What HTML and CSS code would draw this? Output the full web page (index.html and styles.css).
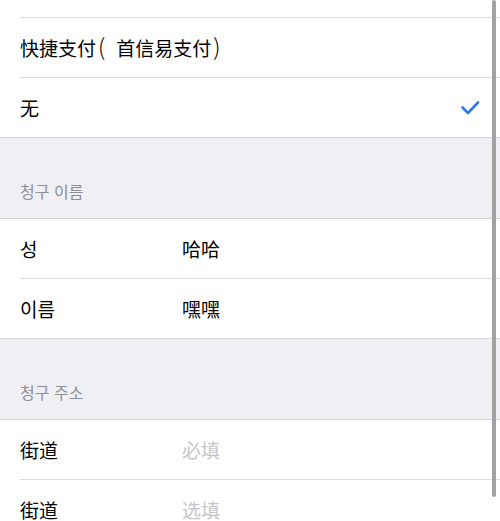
FILE: index.html
```html
<!DOCTYPE html>
<html lang="zh-CN">
<head>
<meta charset="utf-8">
<link rel="stylesheet" href="styles.css">
</head>
<body>
<div class="page">
  <div class="group group-first">
    <div class="row"><span class="label">信用卡<span class="po">(</span>首信易支付<span class="pc">)</span></span></div>
    <div class="row"><span class="label">快捷支付<span class="po">(</span>首信易支付<span class="pc">)</span></span></div>
    <div class="row row-check">
      <span class="label">无</span>
      <svg class="check" width="20" height="16" viewBox="0 0 20 16"><path d="M2.5 7.5 L8 13 L18 2.5" fill="none" stroke="#2f7ae5" stroke-width="2.6" stroke-linecap="round" stroke-linejoin="round"/></svg>
    </div>
  </div>

  <div class="header"><span lang="ko">청구 이름</span></div>
  <div class="group">
    <div class="row field"><span class="label" lang="ko">성</span><span class="value">哈哈</span></div>
    <div class="row field"><span class="label" lang="ko">이름</span><span class="value">嘿嘿</span></div>
  </div>

  <div class="header"><span lang="ko">청구 주소</span></div>
  <div class="group">
    <div class="row field"><span class="label">街道</span><span class="value placeholder">必填</span></div>
    <div class="row field"><span class="label">街道</span><span class="value placeholder">选填</span></div>
  </div>

  <div class="scrollbar"></div>
</div>
</body>
</html>
```

FILE: styles.css
```css
html, body {
  margin: 0;
  padding: 0;
  background: #efeff4;
  overflow: hidden;
}
body {
  font-family: "Noto Sans CJK SC", "Noto Sans CJK KR", "Noto Sans", sans-serif;
  color: #000;
}
.page {
  position: relative;
  width: 500px;
  height: 521px;
  overflow: hidden;
}
.group {
  background: #fff;
  border-top: 1px solid #d6d6da;
  border-bottom: 1px solid #d6d6da;
  padding-left: 20px;
}
.group-first {
  border-top: none;
  margin-top: -42px;
}
.row {
  height: 59px;
  display: flex;
  align-items: center;
  font-size: 19px;
  line-height: 28px;
  border-bottom: 1px solid #dcdce0;
}
.row:last-child {
  border-bottom: none;
}
.po, .pc {
  font-size: 23px;
  line-height: 20px;
  font-weight: 300;
}
.po {
  margin: 0 11px 0 2px;
}
.pc {
  margin-left: 2px;
}
.row-check {
  justify-content: space-between;
  padding-right: 20px;
}
.check {
  display: block;
  margin-top: 1px;
}
.field {
  display: grid;
  grid-template-columns: 162px 1fr;
  align-items: center;
}
.placeholder {
  color: #c5c5ca;
}
.header {
  height: 80px;
  display: flex;
  align-items: flex-end;
  padding: 0 20px 16px;
  box-sizing: border-box;
  font-size: 16px;
  line-height: 22px;
  color: #8e8e93;
}
.scrollbar {
  position: absolute;
  top: 0;
  right: 4px;
  width: 4px;
  height: 497px;
  border-radius: 2px;
  background: #a2a2a2;
}
```
